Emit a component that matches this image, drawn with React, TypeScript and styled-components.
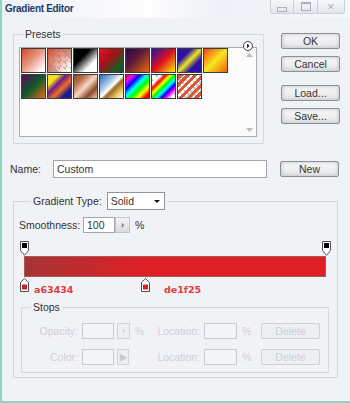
import styled, { createGlobalStyle } from "styled-components";

const GlobalStyle = createGlobalStyle`
  html, body {
    margin: 0;
    padding: 0;
    background: #f1f2f6;
  }
  body {
    font-family: "Liberation Sans", Arial, sans-serif;
  }
`;

const CHECKER = `linear-gradient(45deg, #c8c8c8 25%, transparent 25%, transparent 75%, #c8c8c8 75%),
  linear-gradient(45deg, #c8c8c8 25%, #fff 25%, #fff 75%, #c8c8c8 75%)`;

const presets: { bg: string; checker?: boolean }[] = [
  { bg: "linear-gradient(135deg, #cf4a2c 0%, #e6937c 45%, #fff 90%)" },
  { bg: "linear-gradient(135deg, #cf4a2c 0%, rgba(207,74,44,0.55) 45%, rgba(207,74,44,0) 90%)", checker: true },
  { bg: "linear-gradient(135deg, #000 0%, #000 35%, #fff 72%, #fff 100%)" },
  { bg: "linear-gradient(135deg, #e8101c 0%, #a41218 40%, #1a5a28 80%, #145022 100%)" },
  { bg: "linear-gradient(135deg, #2a0848 0%, #5a1a3a 40%, #e8680e 100%)" },
  { bg: "linear-gradient(135deg, #2410a0 0%, #e01020 50%, #f8f000 100%)" },
  { bg: "linear-gradient(135deg, #3010a0 0%, #3010a0 28%, #e8e820 50%, #3010a0 72%, #3010a0 100%)" },
  { bg: "linear-gradient(135deg, #f04010 0%, #f8e820 50%, #f06010 100%)" },
  { bg: "linear-gradient(135deg, #5a0a5a 0%, #0e5a2a 50%, #f06a10 100%)" },
  { bg: "linear-gradient(135deg, #f8e020 0%, #f8e020 22%, #6a1a8a 40%, #f07020 60%, #201890 80%, #201890 100%)" },
  { bg: "linear-gradient(135deg, #8a4a2a 0%, #b87050 25%, #f8d8c0 50%, #8a4a2a 75%, #f0c8a8 100%)" },
  { bg: "linear-gradient(135deg, #2a6ab8 0%, #a8c8e8 35%, #fff 50%, #9a6a20 60%, #e8c860 80%, #fff 100%)" },
  { bg: "linear-gradient(135deg, #f00 0%, #f0f 15%, #00f 30%, #0ff 45%, #0f0 60%, #ff0 75%, #f00 90%)" },
  { bg: "linear-gradient(135deg, transparent 0%, transparent 20%, #f00 30%, #ff0 40%, #0f0 50%, #0ff 60%, #00f 70%, #f0f 80%, transparent 90%)", checker: true },
  { bg: "linear-gradient(135deg, #d85838 0%, #d85838 12%, transparent 12%), repeating-linear-gradient(135deg, #d85838 0 3px, transparent 3px 5.5px)", checker: true },
];

const gradientStops = [
  { color: "#a63434", location: 0, label: "a63434", labelLeft: 15 },
  { color: "#de1f25", location: 40, label: "de1f25", labelLeft: 145 },
];

const BAR_WIDTH = 302;
const BAR_LEFT = 5;

const Window = styled.div`
  position: relative;
  width: 350px;
  height: 403px;
  box-sizing: border-box;
  border-left: 2px solid #8ad6c2;
  border-bottom: 2px solid #8ad6c2;
  background: #f1f2f6;
  overflow: hidden;
  font-family: "Liberation Sans", Arial, sans-serif;
  font-size: 10.5px;
  color: #333;
`;

const TitleBar = styled.div`
  height: 18px;
  display: flex;
  justify-content: space-between;
  padding: 0 5px 0 3px;
  background: linear-gradient(to right, #edf0f5, #fdfdfe 42%, #eef1f6 62%, #f6f7fa);
`;

const Title = styled.div`
  padding-top: 3px;
  font-size: 10px;
  font-weight: bold;
  letter-spacing: -0.3px;
  color: #1e3a66;
`;

const WinControls = styled.div`
  display: flex;
  height: 14px;
`;

const WinButton = styled.div<{ $w: number }>`
  width: ${(p) => p.$w}px;
  box-sizing: border-box;
  display: flex;
  align-items: center;
  justify-content: center;
  border: 1px solid #c9ced7;
  border-top: none;
  margin-left: -1px;
  background: linear-gradient(#f6f8fb, #e2e6ed);
  color: #a9aeb7;
  font-size: 9px;
  &:first-child {
    border-bottom-left-radius: 3px;
  }
  &:last-child {
    border-bottom-right-radius: 3px;
  }
`;

const MinGlyph = styled.span`
  width: 8px;
  height: 3px;
  margin-top: 5px;
  border: 1px solid #aab0b9;
`;

const MaxGlyph = styled.span`
  width: 8px;
  height: 6px;
  border: 1px solid #aab0b9;
  border-top-width: 2px;
`;

const Body = styled.div`
  padding-left: 8px;
`;

const TopRow = styled.div`
  display: flex;
  margin-top: 10px;
`;

const Group = styled.fieldset<{ $w: number; $h: number; $ml: number }>`
  position: relative;
  box-sizing: border-box;
  width: ${(p) => p.$w}px;
  height: ${(p) => p.$h}px;
  margin: 0 0 0 ${(p) => p.$ml}px;
  min-width: 0;
  border: 1px solid #d4d7de;
`;

const PresetsGroup = styled(Group)`
  padding: 7px 5px 0 5px;
`;

const Legend = styled.legend<{ $ml: number }>`
  margin-left: ${(p) => p.$ml}px;
  padding: 0 2px;
  line-height: 12px;
  font-size: 10.5px;
  color: #333;
`;

const MenuArrow = styled.div`
  position: absolute;
  top: 1px;
  right: 10px;
  width: 10px;
  height: 10px;
  display: flex;
  align-items: center;
  justify-content: center;
`;

const ListBox = styled.div`
  width: 238px;
  height: 90px;
  box-sizing: border-box;
  display: flex;
  border: 1px solid #a9adb5;
  background: #fbfbfc;
`;

const SwatchGrid = styled.div`
  display: grid;
  grid-template-columns: repeat(8, 25px);
  grid-auto-rows: 25px;
  gap: 1px;
  padding-left: 1px;
  align-content: start;
`;

const Swatch = styled.div<{ $bg: string; $checker?: boolean }>`
  box-sizing: border-box;
  border: 1px solid #3a3a3a;
  background: ${(p) => (p.$checker ? `${p.$bg}, ${CHECKER}` : p.$bg)};
  background-size: ${(p) => (p.$checker ? "100% 100%, 100% 100%, 6px 6px, 6px 6px" : "100% 100%")};
  background-position: ${(p) => (p.$checker ? "0 0, 0 0, 0 0, 3px 3px" : "0 0")};
`;

const ScrollCol = styled.div`
  margin-left: auto;
  width: 13px;
  display: flex;
  flex-direction: column;
  justify-content: space-between;
  align-items: center;
  padding: 5px 0 4px;
`;

const ButtonCol = styled.div`
  display: flex;
  flex-direction: column;
  margin-left: 17px;
  padding-top: 5px;
`;

const Button = styled.button<{ $mt?: number; $disabled?: boolean }>`
  width: 59px;
  height: 16px;
  margin: ${(p) => p.$mt || 0}px 0 0 0;
  padding: 0;
  box-sizing: border-box;
  border: 1px solid ${(p) => (p.$disabled ? "#cfd1d6" : "#8d9097")};
  border-radius: 2px;
  background: ${(p) =>
    p.$disabled ? "#eeeff2" : "linear-gradient(to bottom, #fafafa, #e4e5e7)"};
  box-shadow: ${(p) => (p.$disabled ? "none" : "inset 0 0 4px #b9bbc0")};
  font-family: "Liberation Sans", Arial, sans-serif;
  font-size: 10.5px;
  color: ${(p) => (p.$disabled ? "#cdd0d6" : "#333")};
  line-height: 14px;
`;

const NameRow = styled.div`
  display: flex;
  align-items: center;
  margin-top: 16px;
  height: 18px;
`;

const NameLabel = styled.span`
  width: 43px;
`;

const TextField = styled.div`
  width: 214px;
  height: 18px;
  box-sizing: border-box;
  border: 1px solid #a2a6ae;
  background: #fff;
  padding-left: 3px;
  line-height: 16px;
  margin-right: 13px;
`;

const GradientGroup = styled(Group)`
  margin-top: 14px;
  padding: 7px 5px 0 5px;
`;

const TypeLegend = styled.legend`
  display: flex;
  align-items: center;
  margin-left: 12px;
  padding: 0 2px;
  height: 18px;
`;

const SelectBox = styled.div`
  width: 58px;
  height: 18px;
  box-sizing: border-box;
  margin-left: 5px;
  display: flex;
  align-items: center;
  justify-content: space-between;
  padding: 0 4px 0 3px;
  border: 1px solid #8f949c;
  background: #fff;
`;

const SmoothRow = styled.div`
  display: flex;
  align-items: center;
  height: 16px;
`;

const FieldLabel = styled.span<{ $w: number; $disabled?: boolean }>`
  width: ${(p) => p.$w}px;
  text-align: ${(p) => (p.$disabled ? "right" : "left")};
  color: ${(p) => (p.$disabled ? "#cdd0d6" : "#333")};
  flex-shrink: 0;
`;

const NumField = styled.div<{ $w: number; $disabled?: boolean }>`
  width: ${(p) => p.$w}px;
  height: 16px;
  box-sizing: border-box;
  border: 1px solid ${(p) => (p.$disabled ? "#c8cbd2" : "#a2a6ae")};
  background: ${(p) => (p.$disabled ? "#f3f4f7" : "#fff")};
  padding-left: 3px;
  line-height: 14px;
  flex-shrink: 0;
`;

const Stepper = styled.div<{ $ml: number; $w: number; $disabled?: boolean }>`
  width: ${(p) => p.$w}px;
  height: 16px;
  margin-left: ${(p) => p.$ml}px;
  box-sizing: border-box;
  display: flex;
  align-items: center;
  justify-content: center;
  border: 1px solid ${(p) => (p.$disabled ? "#d2d4d9" : "#c3c5ca")};
  background: ${(p) => (p.$disabled ? "#eeeff2" : "linear-gradient(#f4f4f5, #d9dadd)")};
  color: ${(p) => (p.$disabled ? "#c8cad0" : "#555")};
  font-size: 9px;
  font-weight: bold;
  flex-shrink: 0;
`;

const Unit = styled.span<{ $w: number; $disabled?: boolean }>`
  width: ${(p) => p.$w}px;
  margin-left: 5px;
  color: ${(p) => (p.$disabled ? "#cdd0d6" : "#333")};
  flex-shrink: 0;
`;

const GradientArea = styled.div`
  position: relative;
  margin-top: 8px;
  height: 53px;
`;

const Bar = styled.div`
  position: absolute;
  top: 15px;
  left: ${BAR_LEFT}px;
  width: ${BAR_WIDTH}px;
  height: 21px;
  box-sizing: border-box;
  border: 1px solid #a7595b;
`;

const Marker = styled.svg<{ $top: number }>`
  position: absolute;
  top: ${(p) => p.$top}px;
  display: block;
`;

const StopLabel = styled.span`
  position: absolute;
  top: 43px;
  font-family: "DejaVu Sans", Verdana, sans-serif;
  font-size: 9.5px;
  font-weight: bold;
  color: #e33a3c;
`;

const StopsGroup = styled(Group)`
  margin-top: 7px;
  padding: 9px 0 0 0;
`;

const StopRow = styled.div<{ $mt?: number }>`
  display: flex;
  align-items: center;
  height: 17px;
  margin-top: ${(p) => p.$mt || 0}px;
`;

const Gap = styled.span<{ $w: number }>`
  width: ${(p) => p.$w}px;
  flex-shrink: 0;
`;

const Grip = styled.div`
  position: absolute;
  right: 3px;
  bottom: 3px;
  width: 5px;
  height: 4px;
  background: radial-gradient(circle, #a0a4ab 40%, transparent 45%);
  background-size: 2px 2px;
`;

function TopStop({ location }: { location: number }) {
  const x = BAR_LEFT + (location / 100) * BAR_WIDTH - 4;
  return (
    <Marker $top={0} width="9" height="15" viewBox="0 0 9 15" style={{ left: x }}>
      <path d="M0.5 0.5 H8.5 V9.5 L4.5 14.3 L0.5 9.5 Z" fill="#fff" stroke="#505050" />
      <rect x="2" y="2" width="5" height="5" fill="#000" />
    </Marker>
  );
}

function BottomStop({ location, color }: { location: number; color: string }) {
  const x = BAR_LEFT + (location / 100) * BAR_WIDTH - 4;
  return (
    <Marker $top={37} width="9" height="14" viewBox="0 0 9 14" style={{ left: x }}>
      <path d="M4.5 0.6 L8.5 4.5 V13.5 H0.5 V4.5 Z" fill="#fff" stroke="#505050" />
      <rect x="2" y="6.5" width="5" height="5" fill={color === "#a63434" ? "#c0282e" : color} />
    </Marker>
  );
}

export default function App() {
  const bar = `linear-gradient(to right, ${gradientStops
    .map((s) => `${s.color} ${s.location}%`)
    .join(", ")}, ${gradientStops[gradientStops.length - 1].color} 100%)`;

  return (
    <Window>
      <GlobalStyle />
      <TitleBar>
        <Title>Gradient Editor</Title>
        <WinControls>
          <WinButton $w={24}>
            <MinGlyph />
          </WinButton>
          <WinButton $w={25}>
            <MaxGlyph />
          </WinButton>
          <WinButton $w={28}>✕</WinButton>
        </WinControls>
      </TitleBar>

      <Body>
        <TopRow>
          <PresetsGroup $w={251} $h={116} $ml={3}>
            <Legend $ml={4}>Presets</Legend>
            <MenuArrow>
              <svg width="10" height="10" viewBox="0 0 10 10">
                <circle cx="5" cy="5" r="4.5" fill="#fff" stroke="#444" />
                <path d="M4 2.8 L6.6 5 L4 7.2 Z" fill="#222" />
              </svg>
            </MenuArrow>
            <ListBox>
              <SwatchGrid>
                {presets.map((p, i) => (
                  <Swatch key={i} $bg={p.bg} $checker={p.checker} />
                ))}
              </SwatchGrid>
              <ScrollCol>
                <svg width="7" height="4" viewBox="0 0 7 4">
                  <path d="M0 4 L3.5 0 L7 4 Z" fill="#b8bbc2" />
                </svg>
                <svg width="7" height="4" viewBox="0 0 7 4">
                  <path d="M0 0 L3.5 4 L7 0 Z" fill="#b8bbc2" />
                </svg>
              </ScrollCol>
            </ListBox>
          </PresetsGroup>

          <ButtonCol>
            <Button>OK</Button>
            <Button $mt={7}>Cancel</Button>
            <Button $mt={13}>Load...</Button>
            <Button $mt={7}>Save...</Button>
          </ButtonCol>
        </TopRow>

        <NameRow>
          <NameLabel>Name:</NameLabel>
          <TextField>Custom</TextField>
          <Button>New</Button>
        </NameRow>

        <GradientGroup $w={325} $h={186} $ml={3}>
          <TypeLegend>
            Gradient Type:
            <SelectBox>
              Solid
              <svg width="6" height="3" viewBox="0 0 6 3">
                <path d="M0 0 H6 L3 3 Z" fill="#111" />
              </svg>
            </SelectBox>
          </TypeLegend>

          <SmoothRow>
            <FieldLabel $w={64}>Smoothness:</FieldLabel>
            <NumField $w={32}>100</NumField>
            <Stepper $ml={0} $w={15}>›</Stepper>
            <Unit $w={20}>%</Unit>
          </SmoothRow>

          <GradientArea>
            <TopStop location={0} />
            <TopStop location={100} />
            <Bar style={{ background: bar }} />
            {gradientStops.map((s) => (
              <BottomStop key={s.label} location={s.location} color={s.color} />
            ))}
            {gradientStops.map((s) => (
              <StopLabel key={s.label} style={{ left: s.labelLeft }}>
                {s.label}
              </StopLabel>
            ))}
          </GradientArea>

          <StopsGroup $w={308} $h={72} $ml={2}>
            <Legend $ml={9}>Stops</Legend>
            <StopRow>
              <FieldLabel $w={56} $disabled>Opacity:</FieldLabel>
              <Gap $w={4} />
              <NumField $w={32} $disabled />
              <Stepper $ml={3} $w={13} $disabled>›</Stepper>
              <Unit $w={21} $disabled>%</Unit>
              <FieldLabel $w={44} $disabled>Location:</FieldLabel>
              <Gap $w={4} />
              <NumField $w={33} $disabled />
              <Unit $w={19} $disabled>%</Unit>
              <Button $disabled>Delete</Button>
            </StopRow>
            <StopRow $mt={9}>
              <FieldLabel $w={56} $disabled>Color:</FieldLabel>
              <Gap $w={4} />
              <NumField $w={32} $disabled />
              <Stepper $ml={3} $w={12} $disabled>▶</Stepper>
              <Unit $w={21} $disabled />
              <FieldLabel $w={45} $disabled>Location:</FieldLabel>
              <Gap $w={4} />
              <NumField $w={33} $disabled />
              <Unit $w={19} $disabled>%</Unit>
              <Button $disabled>Delete</Button>
            </StopRow>
          </StopsGroup>
        </GradientGroup>
      </Body>
      <Grip />
    </Window>
  );
}
